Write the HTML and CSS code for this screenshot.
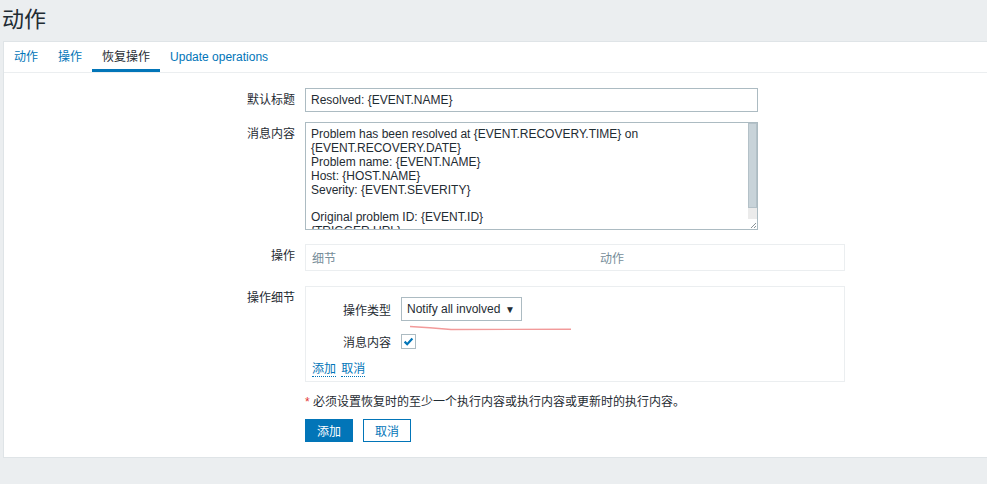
FILE: index.html
```html
<!DOCTYPE html>
<html lang="zh">
<head>
    <meta charset="UTF-8">
    <title>动作</title>
    <link rel="stylesheet" href="styles.css">
</head>
<body>
    <header class="page-header">
        <h1>动作</h1>
    </header>

    <main class="panel">
        <ul class="tabs">
            <li class="tab">动作</li>
            <li class="tab">操作</li>
            <li class="tab active">恢复操作</li>
            <li class="tab">Update operations</li>
        </ul>

        <form class="form">
            <label class="form-label">默认标题</label>
            <div class="form-field">
                <input class="text-input" type="text" value="Resolved: {EVENT.NAME}">
            </div>

            <label class="form-label">消息内容</label>
            <div class="form-field">
                <div class="text-area-wrap">
                    <textarea class="text-area">Problem has been resolved at {EVENT.RECOVERY.TIME} on {EVENT.RECOVERY.DATE}
Problem name: {EVENT.NAME}
Host: {HOST.NAME}
Severity: {EVENT.SEVERITY}

Original problem ID: {EVENT.ID}
{TRIGGER.URL}</textarea>
                    <div class="scrollbar">
                        <div class="scroll-thumb"></div>
                        <div class="scroll-track"></div>
                        <div class="resizer">
                            <svg width="7" height="7" viewBox="0 0 7 7">
                                <path d="M6 1 L1 6 M6 4 L4 6" stroke="#8a9499" stroke-width="1"/>
                            </svg>
                        </div>
                    </div>
                </div>
            </div>

            <label class="form-label row-ops">操作</label>
            <div class="form-field row-ops">
                <div class="table-box">
                    <span class="th th-detail">细节</span>
                    <span class="th">动作</span>
                </div>
            </div>

            <label class="form-label row-details">操作细节</label>
            <div class="form-field row-details">
                <div class="details-box">
                    <div class="inner-grid">
                        <span class="inner-label">操作类型</span>
                        <div class="select">
                            <span>Notify all involved</span>
                            <span class="select-arrow">▼</span>
                        </div>

                        <span class="inner-label">消息内容</span>
                        <div class="check-cell">
                            <span class="checkbox">
                                <svg width="13" height="13" viewBox="0 0 13 13">
                                    <path d="M2.6 6.6 L5.2 9.2 L10.4 3.6" fill="none" stroke="#0275b8" stroke-width="2.2"/>
                                </svg>
                            </span>
                        </div>
                    </div>
                    <div class="inline-links">
                        <a class="dotted-link">添加</a>
                        <a class="dotted-link">取消</a>
                    </div>
                    <svg class="scribble" width="164" height="8" viewBox="0 0 164 8">
                        <path d="M1 1.5 Q20 2.6 42 4.5 L162 4.3" fill="none" stroke="#f29a9a" stroke-width="1.4"/>
                    </svg>
                </div>
            </div>

            <div class="form-field note-row">
                <p class="note"><span class="asterisk">*</span> 必须设置恢复时的至少一个执行内容或执行内容或更新时的执行内容。</p>
            </div>

            <div class="form-field buttons-row">
                <button type="button" class="btn btn-primary">添加</button>
                <button type="button" class="btn btn-alt">取消</button>
            </div>
        </form>
    </main>
</body>
</html>
```

FILE: styles.css
```css
body {
    margin: 0;
    background: #ebeef0;
    font-family: "Liberation Sans", Arial, "Noto Sans CJK SC", sans-serif;
    font-size: 12px;
    color: #1f2c33;
    overflow: hidden;
}
.page-header {
    height: 41px;
}
.page-header h1 {
    margin: 0;
    padding-left: 2px;
    font-size: 22px;
    font-weight: normal;
    line-height: 40px;
}
.panel {
    margin-left: 3px;
    margin-right: -4px;
    background: #fff;
    border: 1px solid #dfe4e7;
}

/* tabs */
.tabs {
    display: flex;
    margin: 0;
    padding: 0;
    list-style: none;
    border-bottom: 1px solid #ebeef0;
}
.tab {
    padding: 4px 10px 0;
    line-height: 23px;
    color: #0275b8;
    border-bottom: 3px solid transparent;
}
.tab.active {
    color: #1f2c33;
    border-bottom-color: #0275b8;
}

/* form */
.form {
    display: grid;
    grid-template-columns: 291px 1fr;
    column-gap: 10px;
    row-gap: 10px;
    padding: 15px 0 15px;
}
.form-label {
    text-align: right;
    padding-top: 5px;
    line-height: 14px;
}
.form-field {
    grid-column: 2;
}
.form-label.row-ops,
.form-field.row-ops {
    margin-top: 4px;
}
.form-label.row-details,
.form-field.row-details {
    margin-top: 5px;
}
.text-input {
    box-sizing: border-box;
    width: 453px;
    height: 24px;
    padding: 0 5px;
    border: 1px solid #acbbc2;
    font: inherit;
    color: #1f2c33;
    outline: none;
}
.text-area-wrap {
    box-sizing: border-box;
    width: 453px;
    height: 108px;
    display: flex;
    border: 1px solid #acbbc2;
}
.text-area {
    flex: 1;
    margin: 0;
    padding: 5px 5px 0;
    border: none;
    font: inherit;
    line-height: 13.9px;
    color: #1f2c33;
    resize: none;
    overflow: hidden;
    outline: none;
}
.scrollbar {
    width: 9px;
    display: flex;
    flex-direction: column;
}
.scroll-thumb {
    height: 85px;
    background: #c8d3d9;
    border: 1px solid #b4c1c8;
    box-sizing: border-box;
}
.scroll-track {
    flex: 1;
    background: #ebebeb;
}
.resizer {
    height: 10px;
    display: flex;
    align-items: flex-end;
    justify-content: flex-end;
    background: #fff;
}

.table-box {
    box-sizing: border-box;
    width: 540px;
    height: 27px;
    display: flex;
    align-items: center;
    padding: 0 6px;
    border: 1px solid #ebeef0;
}
.th {
    color: #768d99;
}
.th-detail {
    width: 288px;
}

.details-box {
    position: relative;
    box-sizing: border-box;
    width: 540px;
    padding: 10px 6px 4px;
    border: 1px solid #ebeef0;
}
.inner-grid {
    display: grid;
    grid-template-columns: 79px auto;
    column-gap: 10px;
    row-gap: 10px;
    align-items: center;
    justify-items: start;
}
.inner-label {
    justify-self: end;
}
.select {
    box-sizing: border-box;
    width: 121px;
    height: 24px;
    display: flex;
    align-items: center;
    justify-content: space-between;
    padding: 0 6px 0 5px;
    border: 1px solid #acbbc2;
}
.select-arrow {
    font-size: 10px;
}
.check-cell {
    height: 21px;
    display: flex;
    align-items: center;
}
.checkbox {
    box-sizing: border-box;
    width: 15px;
    height: 15px;
    display: flex;
    align-items: center;
    justify-content: center;
    border: 1px solid #acbbc2;
}
.inline-links {
    margin-top: 9px;
    line-height: 16px;
}
.dotted-link {
    color: #0275b8;
    border-bottom: 1px dotted #0275b8;
    margin-right: 2px;
}
.scribble {
    position: absolute;
    left: 103px;
    top: 38px;
}

.note-row {
    margin-top: 3px;
}
.note {
    margin: 0;
    line-height: 14px;
}
.asterisk {
    color: #e33734;
}
.buttons-row {
    display: flex;
    gap: 10px;
    margin-top: 0;
}
.btn {
    box-sizing: border-box;
    width: 48px;
    height: 23px;
    padding: 0;
    font: inherit;
    border: 1px solid #0275b8;
}
.btn-primary {
    background: #0275b8;
    color: #fff;
}
.btn-alt {
    background: #fff;
    color: #0275b8;
}
```
